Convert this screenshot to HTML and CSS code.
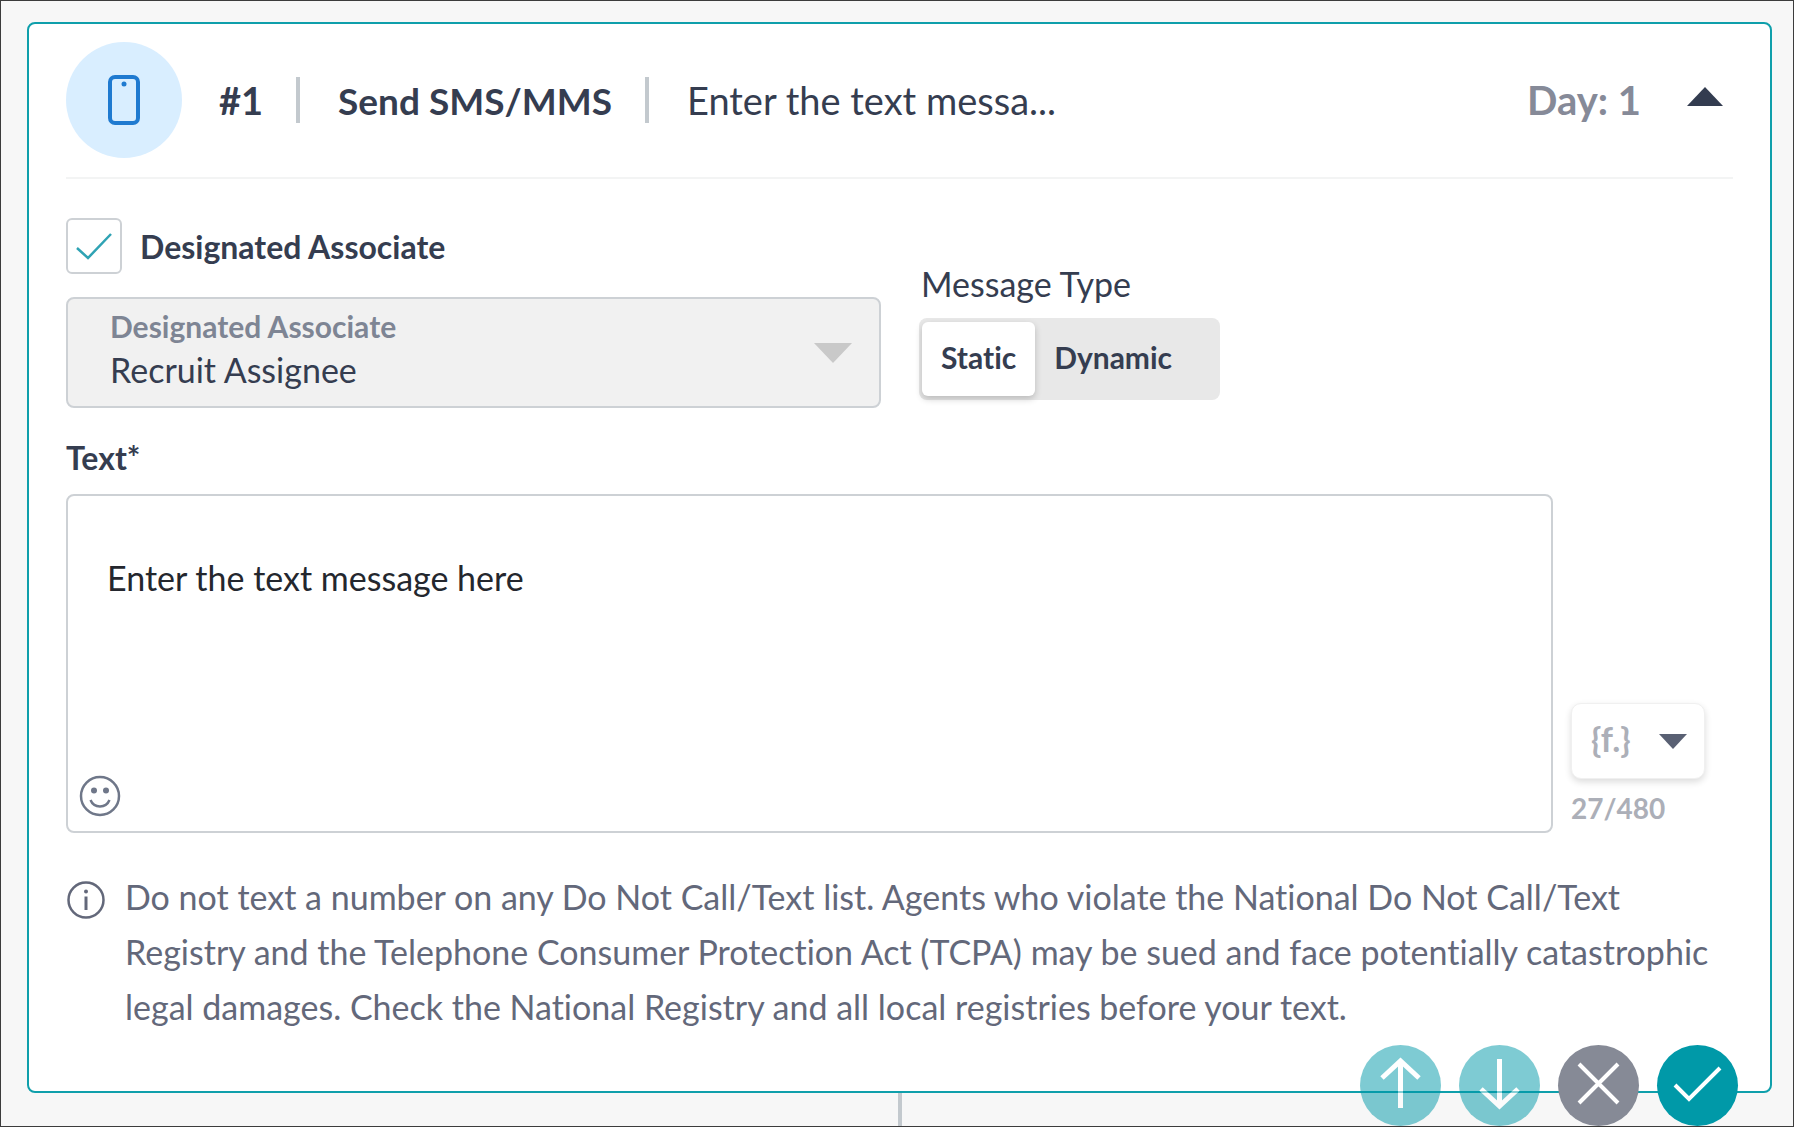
FILE: index.html
```html
<!DOCTYPE html>
<html lang="en">
<head>
<meta charset="utf-8">
<meta name="viewport" content="width=device-width, initial-scale=1">
<title>Send SMS/MMS</title>
<link rel="stylesheet" href="styles.css">
</head>
<body>
<main class="canvas">
  <section class="card">
    <header class="card-header">
      <span class="step-icon">
        <svg width="34" height="52" viewBox="0 0 34 52" fill="none" stroke="#1f7ad0" stroke-width="4">
          <rect x="3" y="3" width="28" height="46" rx="5"/>
          <circle cx="17" cy="10" r="2.500" fill="#1f7ad0" stroke="none"/>
        </svg>
      </span>
      <span class="step-number">#1</span>
      <span class="separator"></span>
      <h1 class="step-title">Send SMS/MMS</h1>
      <span class="separator"></span>
      <span class="step-preview">Enter the text messa...</span>
      <span class="step-day">Day: 1</span>
      <button class="collapse" type="button" aria-label="Collapse step">
        <svg width="36" height="20" viewBox="0 0 36 20"><path d="M18 0L36 19H0z" fill="#333c50"/></svg>
      </button>
    </header>

    <div class="options">
      <div class="assignee">
        <div class="check-row">
          <span class="check-box">
            <input class="check-input" type="checkbox" id="designated" checked>
            <svg class="check-mark" width="36" height="28" viewBox="0 0 36 28" fill="none" stroke="#2fa3b4" stroke-width="2.500"><path d="M1 15L12 25L35 1"/></svg>
          </span>
          <label class="label" for="designated">Designated Associate</label>
        </div>
        <div class="select-box">
          <label class="select-label" for="associate">Designated Associate</label>
          <select class="select" id="associate" disabled>
            <option>Recruit Assignee</option>
          </select>
          <svg class="select-arrow" width="38" height="20" viewBox="0 0 38 20"><path d="M0 0H38L19 20z" fill="#c9c9c9"/></svg>
        </div>
      </div>
      <div class="message-type" role="group" aria-labelledby="type-label">
        <span class="type-label" id="type-label">Message Type</span>
        <div class="toggle">
          <button class="toggle-item active" type="button" aria-pressed="true">Static</button>
          <button class="toggle-item" type="button" aria-pressed="false">Dynamic</button>
        </div>
      </div>
    </div>

    <label class="label text-label" for="message">Text*</label>
    <div class="message-row">
      <div class="message-box">
        <textarea class="message" id="message">Enter the text message here</textarea>
        <button class="emoji" type="button" aria-label="Insert emoji">
          <svg width="42" height="42" viewBox="0 0 42 42" fill="none" stroke="#6f7789" stroke-width="2.500">
            <circle cx="21" cy="21" r="19"/>
            <circle cx="15" cy="15.500" r="3" fill="#6f7789" stroke="none"/>
            <circle cx="27" cy="15.500" r="3" fill="#6f7789" stroke="none"/>
            <path d="M11.500 25C15 33.500 27 33.500 30.500 25"/>
          </svg>
        </button>
      </div>
      <div class="message-tools">
        <button class="merge" type="button" aria-label="Insert merge field">
          <span class="merge-text">{f.}</span>
          <svg width="28" height="15" viewBox="0 0 28 15"><path d="M0 0H28L14 15z" fill="#596073"/></svg>
        </button>
        <span class="counter">27/480</span>
      </div>
    </div>

    <div class="notice">
      <svg class="notice-icon" width="38" height="38" viewBox="0 0 38 38" fill="none" stroke="#63687a" stroke-width="2.500">
        <circle cx="19" cy="19" r="17.500"/>
        <path d="M19 15.500V29" stroke-width="3"/>
        <circle cx="19" cy="10.500" r="2" fill="#63687a" stroke="none"/>
      </svg>
      <p class="notice-text">Do not text a number on any Do Not Call/Text list. Agents who violate the National Do Not Call/Text Registry and the Telephone Consumer Protection Act (TCPA) may be sued and face potentially catastrophic legal damages. Check the National Registry and all local registries before your text.</p>
    </div>

    <div class="actions">
      <button class="action faded" type="button" aria-label="Move up">
        <svg width="81" height="81" viewBox="0 0 81 81" fill="none" stroke="#fff" stroke-width="5"><path d="M40.500 63V16M22 33L40.500 16L59 33"/></svg>
      </button>
      <button class="action faded" type="button" aria-label="Move down">
        <svg width="81" height="81" viewBox="0 0 81 81" fill="none" stroke="#fff" stroke-width="5"><path d="M40.500 14V61M22 44L40.500 61L59 44"/></svg>
      </button>
      <button class="action cancel" type="button" aria-label="Cancel">
        <svg width="81" height="81" viewBox="0 0 81 81" fill="none" stroke="#fff" stroke-width="4"><path d="M21 19L60 58M60 19L21 58"/></svg>
      </button>
      <button class="action confirm" type="button" aria-label="Save">
        <svg width="81" height="81" viewBox="0 0 81 81" fill="none" stroke="#fff" stroke-width="4"><path d="M18 40L32 54L63 23"/></svg>
      </button>
    </div>
  </section>
  <div class="connector"></div>
</main>
</body>
</html>
```
FILE: styles.css
```css
* {
  box-sizing: border-box;
}

body {
  margin: 0;
  background: #f7f7f7;
  color: #353d50;
  font-family: Lato, "Liberation Sans", sans-serif;
  font-size: 34px;
  font-variant-ligatures: none;
}

button,
select,
textarea {
  margin: 0;
  padding: 0;
  border: 0;
  background: none;
  color: inherit;
  font: inherit;
}

svg {
  display: block;
}

.canvas {
  display: flex;
  flex-direction: column;
  min-height: 100vh;
  padding: 21px 21px 0 26px;
  border: 1px solid #3c3c3c;
}

.card {
  position: relative;
  padding: 18px 37px 57px;
  border: 2px solid #0f9fab;
  border-radius: 8px;
  background: #fff;
}

.connector {
  flex: 1;
  width: 4px;
  min-height: 30px;
  margin: 0 auto;
  background: #c3c9ce;
}

.card-header {
  display: flex;
  align-items: center;
  height: 137px;
  padding-bottom: 19px;
  border-bottom: 2px solid #f3f4f4;
  font-size: 38px;
}

.step-icon {
  display: flex;
  align-items: center;
  justify-content: center;
  width: 116px;
  height: 116px;
  border-radius: 50%;
  background: #d9eeff;
}

.step-number {
  margin-left: 37px;
  font-weight: 700;
}

.separator {
  width: 4px;
  height: 46px;
  margin: 0 38px 0 33px;
  background: #c3c9ce;
}

.step-title {
  margin: 0;
  font-size: 37px;
  font-weight: 700;
}

.step-day {
  margin-left: auto;
  color: #868a98;
  font-size: 40px;
  font-weight: 700;
}

.collapse {
  margin: 0 10px 6px 46px;
}

.options {
  display: flex;
  align-items: flex-end;
  gap: 38px;
  padding-top: 39px;
}

.assignee {
  flex: 0 1 815px;
}

.check-row {
  display: flex;
  align-items: center;
  gap: 18px;
}

.check-box {
  position: relative;
  width: 56px;
  height: 56px;
}

.check-input {
  width: 56px;
  height: 56px;
  margin: 0;
  border: 2px solid #cdd1d5;
  border-radius: 6px;
  appearance: none;
}

.check-mark {
  position: absolute;
  top: 15px;
  left: 10px;
  pointer-events: none;
}

.label {
  font-size: 32px;
  font-weight: 700;
}

.select-box {
  position: relative;
  margin-top: 23px;
}

.select-label {
  position: absolute;
  top: 11px;
  left: 44px;
  color: #7e8594;
  font-size: 30px;
  font-weight: 700;
}

.select {
  display: block;
  width: 100%;
  height: 111px;
  padding: 34px 44px 0 42px;
  border: 2px solid #cdd1d5;
  border-radius: 8px;
  background: #f1f1f1;
  color: #353d50;
  opacity: 1;
  appearance: none;
}

.select-arrow {
  position: absolute;
  top: 46px;
  right: 29px;
  pointer-events: none;
}

.message-type {
  display: flex;
  flex-direction: column;
  gap: 14px;
  padding-bottom: 8px;
}

.type-label {
  padding-left: 2px;
  line-height: 40px;
}

.toggle {
  display: flex;
  width: 301px;
  height: 82px;
  padding: 4px 3px;
  border-radius: 8px;
  background: #e8e8e8;
}

.toggle-item {
  padding: 0 19px 5px;
  border-radius: 6px;
  font-size: 30px;
  font-weight: 700;
}

.toggle-item.active {
  background: #fff;
  box-shadow: 0 3px 7px rgba(0, 0, 0, 0.2);
}

.text-label {
  display: block;
  padding-top: 28px;
  line-height: 44px;
}

.message-row {
  display: flex;
  align-items: flex-end;
  gap: 18px;
  margin-top: 14px;
}

.message-box {
  position: relative;
  flex: 1;
}

.message {
  display: block;
  width: 100%;
  height: 339px;
  padding: 60px 39px;
  border: 2px solid #cdd1d5;
  border-radius: 8px;
  color: #24272e;
  line-height: 44px;
  resize: none;
}

.emoji {
  position: absolute;
  bottom: 16px;
  left: 13px;
}

.message-tools {
  display: flex;
  flex-direction: column;
  gap: 11px;
  width: 162px;
}

.merge {
  display: flex;
  align-items: center;
  justify-content: space-between;
  width: 134px;
  height: 76px;
  padding: 0 17px 0 19px;
  border: 1px solid #f0f0f0;
  border-radius: 10px;
  background: #fff;
  box-shadow: 0 3px 7px rgba(0, 0, 0, 0.14);
  color: #acafb8;
  font-weight: 700;
}

.merge-text {
  padding-bottom: 6px;
}

.counter {
  padding-bottom: 7px;
  color: #acafb8;
  font-size: 28px;
  font-weight: 700;
  line-height: 36px;
}

.notice {
  display: flex;
  gap: 20px;
  margin-top: 36px;
  padding-left: 1px;
  color: #63687a;
}

.notice-icon {
  flex: none;
  margin-top: 12px;
}

.notice-text {
  margin: 0;
  line-height: 55px;
}

.actions {
  position: absolute;
  right: 32px;
  bottom: -35px;
  display: flex;
  gap: 18px;
}

.action {
  width: 81px;
  height: 81px;
  border-radius: 50%;
}

.action.faded {
  background: #0099a8;
  opacity: 0.5;
}

.action.cancel {
  background: #868a96;
}

.action.confirm {
  background: #0099a8;
}
```
